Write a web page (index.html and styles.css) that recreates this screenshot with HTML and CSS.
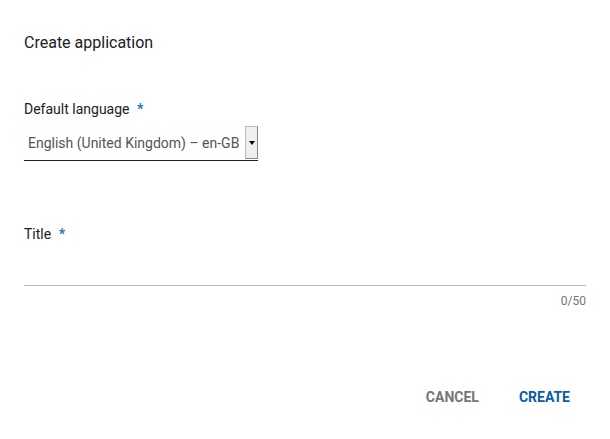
FILE: index.html
```html
<!DOCTYPE html>
<html>
<head>
<meta charset="utf-8">
<link rel="stylesheet" href="styles.css">
</head>
<body>
<div class="dialog">
  <h1 class="heading">Create application</h1>
  <div class="field lang">
    <label class="label">Default language <span class="req">*</span></label>
    <div class="select">
      <span class="select-text">English (United Kingdom) – en-GB</span>
      <span class="arrow"><svg width="6" height="4" viewBox="0 0 6 4"><path d="M0 0h6L3 4z" fill="#000"/></svg></span>
    </div>
  </div>
  <div class="field title">
    <label class="label">Title <span class="req">*</span></label>
    <div class="input"></div>
    <div class="counter">0/50</div>
  </div>
  <div class="actions">
    <button class="btn cancel">CANCEL</button>
    <button class="btn create">CREATE</button>
  </div>
</div>
</body>
</html>
```
FILE: styles.css
```css
html, body { margin: 0; padding: 0; background: #fff; }
body { font-family: Roboto, "Liberation Sans", sans-serif; color: #212121; }
.dialog { padding: 33px 24px 0 24px; display: flex; flex-direction: column; }
.heading { margin: 0; font-size: 16px; font-weight: 400; line-height: 20px; color: #212121; }
.field { display: flex; flex-direction: column; }
.lang { margin-top: 47px; }
.label { font-size: 14px; line-height: 18px; color: #212121; }
.req { color: #1a73c8; font-weight: 700; margin-left: 4px; }
.select { margin-top: 8px; width: 234px; display: flex; align-items: stretch; border-bottom: 1px solid #212121; height: 35px; box-sizing: border-box; }
.select-text { flex: 1; font-size: 14px; color: #555; padding-left: 4px; display: flex; align-items: center; padding-bottom: 1px; }
.arrow { width: 13px; margin-bottom: 1px; background: #efefef; border: 1px solid #bdbdbd; border-right-color: #888; border-bottom-color: #888; display: flex; align-items: center; justify-content: center; box-sizing: border-box; }
.title { margin-top: 64px; }
.input { height: 42px; border-bottom: 1px solid #bdbdbd; }
.counter { align-self: flex-end; font-size: 12px; color: #757575; margin-top: 8px; line-height: 14px; }
.actions { display: flex; justify-content: flex-end; gap: 40px; margin-top: 79px; padding-right: 16px; }
.btn { background: none; border: none; padding: 0; font-family: Roboto, "Liberation Sans", sans-serif; font-size: 14px; font-weight: 700; line-height: 20px; letter-spacing: 0; }
.cancel { color: #757575; }
.create { color: #0b5ba8; }
```
